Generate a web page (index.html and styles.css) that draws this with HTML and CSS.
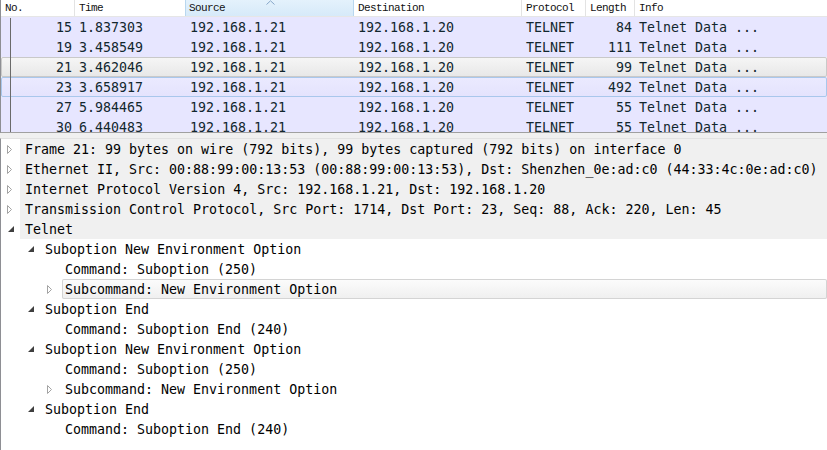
FILE: index.html
```html
<!DOCTYPE html>
<html>
<head>
<meta charset="utf-8">
<link rel="stylesheet" href="styles.css">
</head>
<body>
<div class="plist">
  <div class="phead">
    <div class="h">No.</div>
    <div class="h">Time</div>
    <div class="h sorted">Source<svg class="sortarrow" width="9" height="5" viewBox="0 0 9 5"><polyline points="0.5,4.5 4.5,0.8 8.5,4.5" fill="none" stroke="#86a6c8" stroke-width="1"/></svg></div>
    <div class="h">Destination</div>
    <div class="h">Protocol</div>
    <div class="h">Length</div>
    <div class="h last">Info</div>
  </div>
  <div class="prows">
    <div class="prow"><div class="c r no first">15</div><div class="c">1.837303</div><div class="c">192.168.1.21</div><div class="c">192.168.1.20</div><div class="c">TELNET</div><div class="c r">84</div><div class="c">Telnet Data ...</div></div>
    <div class="prow"><div class="c r no">19</div><div class="c">3.458549</div><div class="c">192.168.1.21</div><div class="c">192.168.1.20</div><div class="c">TELNET</div><div class="c r">111</div><div class="c">Telnet Data ...</div></div>
    <div class="prow sel"><div class="c r no">21</div><div class="c">3.462046</div><div class="c">192.168.1.21</div><div class="c">192.168.1.20</div><div class="c">TELNET</div><div class="c r">99</div><div class="c">Telnet Data ...</div></div>
    <div class="prow hover"><div class="c r no">23</div><div class="c">3.658917</div><div class="c">192.168.1.21</div><div class="c">192.168.1.20</div><div class="c">TELNET</div><div class="c r">492</div><div class="c">Telnet Data ...</div></div>
    <div class="prow"><div class="c r no">27</div><div class="c">5.984465</div><div class="c">192.168.1.21</div><div class="c">192.168.1.20</div><div class="c">TELNET</div><div class="c r">55</div><div class="c">Telnet Data ...</div></div>
    <div class="prow"><div class="c r no">30</div><div class="c">6.440483</div><div class="c">192.168.1.21</div><div class="c">192.168.1.20</div><div class="c">TELNET</div><div class="c r">55</div><div class="c">Telnet Data ...</div></div>
  </div>
</div>
<div class="split"></div>
<div class="tree">
  <div class="node shade"><span class="tw"><svg width="6" height="9" viewBox="0 0 6 9"><path d="M0.5 0.5 L4.5 4.5 L0.5 8.5 Z" fill="#fff" stroke="#a3a3a3"/></svg></span><span class="label">Frame 21: 99 bytes on wire (792 bits), 99 bytes captured (792 bits) on interface 0</span></div>
  <div class="node shade"><span class="tw"><svg width="6" height="9" viewBox="0 0 6 9"><path d="M0.5 0.5 L4.5 4.5 L0.5 8.5 Z" fill="#fff" stroke="#a3a3a3"/></svg></span><span class="label">Ethernet II, Src: 00:88:99:00:13:53 (00:88:99:00:13:53), Dst: Shenzhen_0e:ad:c0 (44:33:4c:0e:ad:c0)</span></div>
  <div class="node shade"><span class="tw"><svg width="6" height="9" viewBox="0 0 6 9"><path d="M0.5 0.5 L4.5 4.5 L0.5 8.5 Z" fill="#fff" stroke="#a3a3a3"/></svg></span><span class="label">Internet Protocol Version 4, Src: 192.168.1.21, Dst: 192.168.1.20</span></div>
  <div class="node shade"><span class="tw"><svg width="6" height="9" viewBox="0 0 6 9"><path d="M0.5 0.5 L4.5 4.5 L0.5 8.5 Z" fill="#fff" stroke="#a3a3a3"/></svg></span><span class="label">Transmission Control Protocol, Src Port: 1714, Dst Port: 23, Seq: 88, Ack: 220, Len: 45</span></div>
  <div class="node shade"><span class="tw open"><svg width="6" height="6" viewBox="0 0 6 6"><path d="M6 0 V6 H0 Z" fill="#3f3f3f"/></svg></span><span class="label">Telnet</span></div>
  <div class="node l1"><span class="tw open"><svg width="6" height="6" viewBox="0 0 6 6"><path d="M6 0 V6 H0 Z" fill="#3f3f3f"/></svg></span><span class="label">Suboption New Environment Option</span></div>
  <div class="node l2"><span class="tw"></span><span class="label">Command: Suboption (250)</span></div>
  <div class="node l2 hov"><span class="tw"><svg width="6" height="9" viewBox="0 0 6 9"><path d="M0.5 0.5 L4.5 4.5 L0.5 8.5 Z" fill="#fff" stroke="#a3a3a3"/></svg></span><span class="label">Subcommand: New Environment Option</span></div>
  <div class="node l1"><span class="tw open"><svg width="6" height="6" viewBox="0 0 6 6"><path d="M6 0 V6 H0 Z" fill="#3f3f3f"/></svg></span><span class="label">Suboption End</span></div>
  <div class="node l2"><span class="tw"></span><span class="label">Command: Suboption End (240)</span></div>
  <div class="node l1"><span class="tw open"><svg width="6" height="6" viewBox="0 0 6 6"><path d="M6 0 V6 H0 Z" fill="#3f3f3f"/></svg></span><span class="label">Suboption New Environment Option</span></div>
  <div class="node l2"><span class="tw"></span><span class="label">Command: Suboption (250)</span></div>
  <div class="node l2"><span class="tw"><svg width="6" height="9" viewBox="0 0 6 9"><path d="M0.5 0.5 L4.5 4.5 L0.5 8.5 Z" fill="#fff" stroke="#a3a3a3"/></svg></span><span class="label">Subcommand: New Environment Option</span></div>
  <div class="node l1"><span class="tw open"><svg width="6" height="6" viewBox="0 0 6 6"><path d="M6 0 V6 H0 Z" fill="#3f3f3f"/></svg></span><span class="label">Suboption End</span></div>
  <div class="node l2"><span class="tw"></span><span class="label">Command: Suboption End (240)</span></div>
</div>
</body>
</html>
```
FILE: styles.css
```css
* { box-sizing: border-box; }
html, body { margin: 0; padding: 0; }
body {
  width: 827px;
  height: 450px;
  overflow: hidden;
  background: #fff;
  font-family: "DejaVu Sans Mono", monospace;
}

.plist {
  height: 133px;
  border-left: 1px solid #8e8f94;
  border-bottom: 1px solid #a0a0a0;
  display: flex;
  flex-direction: column;
  overflow: hidden;
}

.phead {
  display: grid;
  grid-template-columns: 74px 111px 168px 168px 64px 49px 1fr;
  height: 17px;
  flex: none;
  border-bottom: 1px solid #e6e6e6;
  font-family: "Liberation Mono", monospace;
  font-size: 11px;
  line-height: 16px;
  letter-spacing: -0.6px;
  color: #111;
  background: #fff;
}
.phead .h {
  padding-left: 4px;
  padding-top: 1px;
  line-height: 15px;
  border-right: 1px solid #e3e3e3;
  white-space: nowrap;
  position: relative;
}
.phead .h.last { border-right: none; }
.phead .h.sorted {
  padding-left: 3px;
  background: linear-gradient(#e4f2fc, #d6eaf9);
  border-left: 1px solid #b9d7ef;
  border-right: 1px solid #b9d7ef;
  margin-left: -1px;
}
.sortarrow {
  position: absolute;
  top: 0;
  left: 50%;
  margin-left: -4px;
}

.prows {
  flex: 1;
  overflow: hidden;
}
.prow {
  display: grid;
  grid-template-columns: 74px 111px 168px 168px 64px 49px 1fr;
  height: 20px;
  font-size: 13.3px;
  color: #12272e;
  background: #e7e6ff;
  white-space: nowrap;
}
.prow .c {
  padding-left: 4px;
  padding-top: 2px;
  line-height: 18px;
  overflow: hidden;
}
.prow .c.r {
  text-align: right;
  padding-left: 0;
  padding-right: 3px;
}
.prow .no {
  background: linear-gradient(#6a6a6a, #6a6a6a) no-repeat 9px 0 / 1px 100%;
}
.prow .no.first {
  background-position: 9px 1px;
}
.prow.sel {
  background: linear-gradient(#f6f6f6, #e7e7e7);
  box-shadow: inset 0 0 0 1px #c9c9c9;
  border-radius: 2px;
}
.prow.hover {
  background: linear-gradient(#ebeaff, #e4e3fd);
  box-shadow: inset 0 0 0 1px #a9c7ec;
  border-radius: 2px;
}

.split {
  height: 5px;
  background: #f0f0f0;
}

.tree {
  height: 312px;
  border-left: 1px solid #8e8f94;
  border-top: 1px solid #e2e2e2;
  font-size: 13.3px;
  color: #000;
  background: #fff;
}
.node {
  display: flex;
  height: 20px;
  white-space: nowrap;
}
.node.l1 { padding-left: 20px; }
.node.l2 { padding-left: 40px; }
.tw {
  width: 19px;
  flex: none;
  display: flex;
  align-items: center;
  padding-left: 6px;
}
.tw.open { padding-left: 7px; }
.label {
  flex: 1;
  padding-left: 5px;
  padding-top: 2px;
  line-height: 18px;
}
.shade .label { background: #f0f0f0; }
.hov .label {
  margin-left: 2px;
  padding-left: 3px;
  background: linear-gradient(#fcfcfc, #efefef);
  box-shadow: inset 0 0 0 1px #d4d4d4;
  border-radius: 2px;
}
```
